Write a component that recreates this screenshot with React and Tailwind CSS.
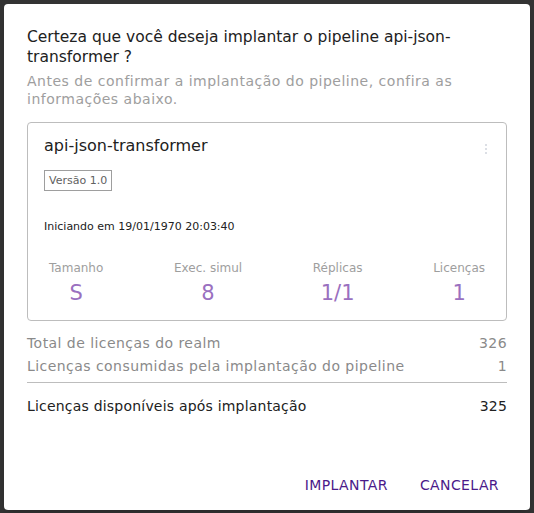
import React from 'react';

const stats = [
  { label: 'Tamanho', value: 'S' },
  { label: 'Exec. simul', value: '8' },
  { label: 'Réplicas', value: '1/1' },
  { label: 'Licenças', value: '1' },
];

function DotsIcon() {
  return (
    <svg width="4" height="12" viewBox="0 0 4 12" className="text-gray-300">
      <circle cx="2" cy="2" r="1" fill="currentColor" />
      <circle cx="2" cy="6" r="1" fill="currentColor" />
      <circle cx="2" cy="10" r="1" fill="currentColor" />
    </svg>
  );
}

export default function App() {
  return (
    <div
      className="w-[534px] h-[513px] bg-[#333333] flex items-center justify-center"
      style={{ fontFamily: '"DejaVu Sans", sans-serif' }}
    >
      <div className="w-[526px] h-[506px] bg-white rounded-[4px] shadow-lg flex flex-col px-[23px] pt-[23px] pb-[8px]">
        <h1 className="text-[15.5px] leading-[20px] text-[#212121] pr-[20px]">
          Certeza que você deseja implantar o pipeline api-json-transformer ?
        </h1>
        <p className="mt-[5px] text-[14px] leading-[18px] tracking-[0.5px] text-[#9e9e9e]">
          Antes de confirmar a implantação do pipeline, confira as informações abaixo.
        </p>

        <div className="mt-[14px] border border-[#bdbdbd] rounded-[4px] px-[16px] pt-[12px] pb-[15px]">
          <div className="flex items-start justify-between">
            <div className="text-[16px] leading-[22px] text-[#212121]">api-json-transformer</div>
            <div className="pt-[8px] pr-[2px]">
              <DotsIcon />
            </div>
          </div>
          <div className="mt-[13px] inline-block border border-[#9e9e9e] px-[4px] text-[11px] leading-[19px] text-[#616161]">
            Versão 1.0
          </div>
          <div className="mt-[28px] text-[11px] leading-[16px] text-[#212121]">
            Iniciando em 19/01/1970 20:03:40
          </div>
          <div className="mt-[26px] flex justify-between px-[5px]">
            {stats.map((s) => (
              <div key={s.label} className="flex flex-col items-center">
                <span className="text-[12px] leading-[14px] text-[#9e9e9e]">{s.label}</span>
                <span className="mt-[6px] text-[21px] leading-[24px] font-medium text-[#9a70c0]">{s.value}</span>
              </div>
            ))}
          </div>
        </div>

        <div className="mt-[11px] flex justify-between text-[14px] leading-[23px] tracking-[0.45px] text-[#8a8a8a]">
          <span>Total de licenças do realm</span>
          <span>326</span>
        </div>
        <div className="flex justify-between text-[14px] leading-[23px] tracking-[0.45px] text-[#8a8a8a]">
          <span>Licenças consumidas pela implantação do pipeline</span>
          <span>1</span>
        </div>
        <div className="mt-[4px] border-t border-[#bdbdbd]" />
        <div className="mt-[12px] flex justify-between text-[14px] leading-[23px] tracking-[0.2px] text-[#212121]">
          <span>Licenças disponíveis após implantação</span>
          <span>325</span>
        </div>

        <div className="mt-auto flex justify-end gap-[16px]">
          <button className="px-[8px] py-[6px] text-[14px] tracking-[0.4px] text-[#4a1a8a] uppercase">
            Implantar
          </button>
          <button className="px-[8px] py-[6px] text-[14px] tracking-[0.4px] text-[#4a1a8a] uppercase">
            Cancelar
          </button>
        </div>
      </div>
    </div>
  );
}
